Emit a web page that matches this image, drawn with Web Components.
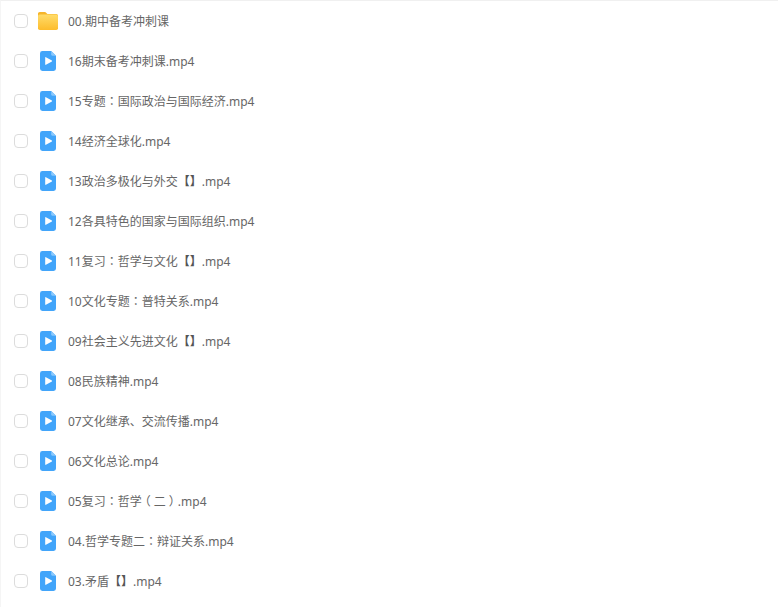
<!DOCTYPE html>
<html lang="zh-CN">
<head>
<meta charset="utf-8">
<style>
  html, body { margin: 0; background: #fff; }
  body { font-family: "Noto Sans", "Noto Sans CJK SC", sans-serif; }
  .p { font-family: "Noto Sans CJK TC", "Noto Sans CJK JP", sans-serif; }
  /* half-width glyph plus margins: paren sits centred in a 12px cell */
  .paren { font-feature-settings: "halt"; margin: 0 3px; }
  .b { font-weight: 700; color: #555; }
</style>
</head>
<body>
<file-list></file-list>
<script>
const FILES = [
  { name: "00.期中备考冲刺课", type: "folder" },
  { name: "16期末备考冲刺课.mp4" },
  { name: "15专题：国际政治与国际经济.mp4" },
  { name: "14经济全球化.mp4" },
  { name: "13政治多极化与外交【】.mp4" },
  { name: "12各具特色的国家与国际组织.mp4" },
  { name: "11复习：哲学与文化【】.mp4" },
  { name: "10文化专题：普特关系.mp4" },
  { name: "09社会主义先进文化【】.mp4" },
  { name: "08民族精神.mp4" },
  { name: "07文化继承、交流传播.mp4" },
  { name: "06文化总论.mp4" },
  { name: "05复习：哲学（二）.mp4" },
  { name: "04.哲学专题二：辩证关系.mp4" },
  { name: "03.矛盾【】.mp4" },
];

const ICONS = {
  folder: `
    <svg width="20" height="20" viewBox="0 0 20 20">
      <defs>
        <linearGradient id="fold" x1="0" y1="0" x2="0" y2="1">
          <stop offset="0" stop-color="#ffdc6a"/>
          <stop offset="1" stop-color="#fdbc2c"/>
        </linearGradient>
      </defs>
      <path d="M0 2.8C0 1.7.7 1 1.8 1h4.8c.8 0 1.3.3 1.8.9l1 1.1h8.8c1.1 0 1.8.7 1.8 1.8V7H0z" fill="#f6b52a"/>
      <rect x="0" y="3.6" width="20" height="15.4" rx="1.8" fill="url(#fold)"/>
    </svg>`,
  video: `
    <svg width="16" height="20" viewBox="0 0 16 20">
      <path d="M2.4 0h8.8L16 4.8v12.8a2.4 2.4 0 0 1-2.4 2.4H2.4A2.4 2.4 0 0 1 0 17.6V2.4A2.4 2.4 0 0 1 2.4 0z" fill="#42a5fa"/>
      <path d="M11.2 0 16 4.8h-3.2a1.6 1.6 0 0 1-1.6-1.6z" fill="#8cc9fc"/>
      <path d="M5.2 6.6c0-.4.4-.6.7-.4l6 3.4c.3.2.3.6 0 .8l-6 3.4c-.3.2-.7 0-.7-.4z" fill="#fff"/>
    </svg>`,
};

class FileRow extends HTMLElement {
  constructor() {
    super();
    this.attachShadow({ mode: "open" });
  }

  connectedCallback() {
    const icon = ICONS[this.getAttribute("type")] || ICONS.video;
    this.shadowRoot.innerHTML = `
      <style>
        :host {
          display: flex;
          align-items: center;
          height: 40px;
          padding-left: 13px;
          font-size: 12px;
          color: #666;
        }
        .check {
          width: 12px;
          height: 12px;
          border: 1px solid #dcdcdc;
          border-radius: 4px;
          background: #fff;
        }
        .icon {
          display: flex;
          justify-content: center;
          width: 20px;
          margin: 0 10px;
        }
      </style>
      <span class="check"></span>
      <span class="icon">${icon}</span>
      <span><slot></slot></span>
    `;
  }
}

class FileList extends HTMLElement {
  constructor() {
    super();
    this.attachShadow({ mode: "open" });
    this.shadowRoot.innerHTML = `
      <style>
        :host {
          display: block;
          height: 607px;
          box-sizing: border-box;
          border-top: 1px solid #f0f0f0;
          border-left: 1px solid #f5f5f5;
          overflow: hidden;
        }
      </style>
      <slot></slot>
    `;
  }

  connectedCallback() {
    FILES.forEach(file => {
      const row = document.createElement("file-row");
      if (file.type) row.setAttribute("type", file.type);
      // the reference centres its full-width punctuation
      row.innerHTML = file.name
        .replace(/：/g, `<span class="p" lang="zh-Hant">：</span>`)
        .replace(/[（）]/g, m => `<span class="paren">${m}</span>`)
        .replace(/[【】]/g, m => `<span class="b">${m}</span>`);
      this.appendChild(row);
    });
  }
}

customElements.define("file-row", FileRow);
customElements.define("file-list", FileList);
</script>
</body>
</html>
